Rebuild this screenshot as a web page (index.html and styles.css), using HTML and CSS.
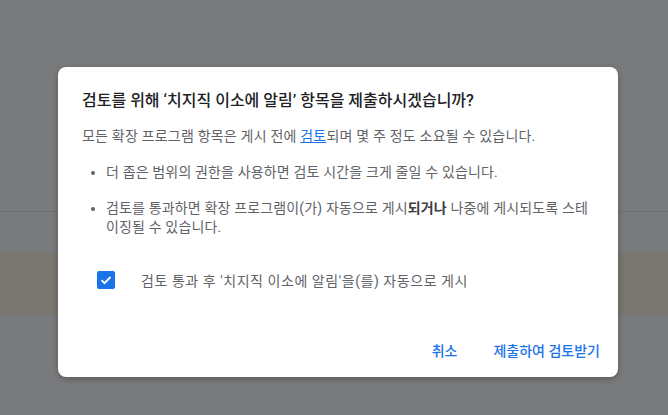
FILE: index.html
```html
<!DOCTYPE html>
<html lang="ko">
<head>
  <meta charset="UTF-8">
  <meta name="viewport" content="width=device-width, initial-scale=1.0">
  <title>검토 제출</title>
  <link rel="stylesheet" href="styles.css">
</head>
<body>
  <div class="backdrop">
    <div class="bg-rule"></div>
    <div class="bg-band"></div>
  </div>

  <div class="dialog">
    <h1 class="dialog-title">검토를 위해 ‘치지직 이소에 알림’ 항목을 제출하시겠습니까?</h1>
    <p class="dialog-text">모든 확장 프로그램 항목은 게시 전에 <a href="#">검토</a>되며 몇 주 정도 소요될 수 있습니다.</p>
    <ul class="dialog-list">
      <li>더 좁은 범위의 권한을 사용하면 검토 시간을 크게 줄일 수 있습니다.</li>
      <li>검토를 통과하면 확장 프로그램이(가) 자동으로 게시<b>되거나</b> 나중에 게시되도록 스테이징될 수 있습니다.</li>
    </ul>
    <label class="check-row">
      <span class="checkbox">
        <svg width="14" height="14" viewBox="0 0 14 14"><path d="M2.5 7.2l3 3 6-6.2" fill="none" stroke="#fff" stroke-width="1.8"/></svg>
      </span>
      <span class="check-label">검토 통과 후 '치지직 이소에 알림'을(를) 자동으로 게시</span>
    </label>
    <div class="dialog-actions">
      <button class="btn">취소</button>
      <button class="btn">제출하여 검토받기</button>
    </div>
  </div>
</body>
</html>
```

FILE: styles.css
```css
html, body {
  margin: 0;
  height: 100%;
}

body {
  font-family: Roboto, "Noto Sans CJK KR", sans-serif;
  background-color: #797a7c;
  overflow: hidden;
}

.backdrop {
  padding-top: 211px;
}

.bg-rule {
  height: 1px;
  background-color: #6e6f71;
}

.bg-band {
  margin-top: 40px;
  height: 63px;
  background-color: #79766f;
}

.dialog {
  position: absolute;
  left: 58px;
  top: 67px;
  width: 560px;
  height: 310px;
  box-sizing: border-box;
  padding: 23px 24px 0 24px;
  background-color: #fff;
  border-radius: 8px;
  box-shadow: 0 2px 6px rgba(0, 0, 0, 0.25);
  display: flex;
  flex-direction: column;
}

.dialog-title {
  margin: 0;
  font-size: 16px;
  font-weight: 500;
  line-height: 22px;
  color: #202124;
}

.dialog-text {
  margin: 14px 0 0;
  font-size: 14px;
  line-height: 20px;
  letter-spacing: 0.2px;
  color: #5f6368;
}

.dialog-text a {
  color: #1a73e8;
}

.dialog-list {
  margin: 17px 0 0;
  padding-left: 24px;
  font-size: 14px;
  line-height: 19px;
  letter-spacing: 0.15px;
  color: #5f6368;
}

.dialog-list li {
  margin-bottom: 17px;
}

.dialog-list li:last-child {
  margin-bottom: 0;
}

.dialog-list b {
  color: #3c4043;
}

.check-row {
  display: flex;
  align-items: center;
  margin-top: 33px;
  padding-left: 15px;
}

.checkbox {
  width: 18px;
  height: 18px;
  border-radius: 2px;
  background-color: #1a73e8;
  display: flex;
  align-items: center;
  justify-content: center;
}

.check-label {
  margin-left: 26px;
  font-size: 14px;
  letter-spacing: 0.55px;
  color: #5f6368;
}

.dialog-actions {
  margin-top: auto;
  margin-right: -14px;
  display: flex;
  justify-content: flex-end;
  gap: 20px;
  padding-bottom: 8px;
}

.btn {
  font-family: inherit;
  font-size: 14px;
  font-weight: 500;
  color: #1a73e8;
  background: none;
  border: none;
  padding: 8px 8px;
  line-height: 20px;
  cursor: pointer;
}
```
